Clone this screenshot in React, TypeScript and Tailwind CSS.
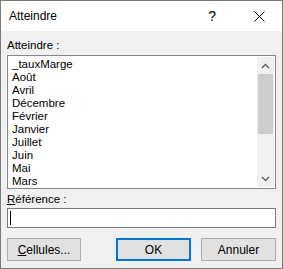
import React from "react";

const items = [
  "_tauxMarge",
  "Août",
  "Avril",
  "Décembre",
  "Février",
  "Janvier",
  "Juillet",
  "Juin",
  "Mai",
  "Mars",
];

const font = { fontFamily: '"Liberation Sans", Arial, sans-serif' };

export default function App() {
  return (
    <div
      className="w-[283px] h-[269px] border border-[#7a7a7a] bg-[#f0f0f0] flex flex-col text-[12px] text-black overflow-hidden"
      style={font}
    >
      {/* Title bar */}
      <div className="h-[30px] bg-white flex items-center pl-[8px] shrink-0">
        <span className="leading-none">Atteindre</span>
        <span className="ml-auto mr-[38px] text-[14px] leading-none">?</span>
        <svg width="11" height="11" viewBox="0 0 11 11" className="mr-[17px]">
          <path d="M0.5 0.5 L10.5 10.5 M10.5 0.5 L0.5 10.5" stroke="#000" strokeWidth="1" />
        </svg>
      </div>

      <div className="flex-1 px-[6px] flex flex-col">
        <div className="mt-[6px] h-[16px] leading-[16px] text-[11.5px]">Atteindre :</div>

        {/* List box */}
        <div className="mt-[2px] h-[134px] border border-[#828790] bg-white flex p-[1px]">
          <div className="flex-1 pl-[3px] pt-[1px] text-[11.5px]">
            {items.map((it) => (
              <div key={it} className="h-[13px] leading-[13px] whitespace-nowrap">
                {it}
              </div>
            ))}
          </div>
          <div className="w-[17px] bg-[#f0f0f0] flex flex-col items-center">
            <div className="h-[17px] w-full flex items-center justify-center">
              <svg width="9" height="6" viewBox="0 0 9 6">
                <path d="M1 5 L4.5 1.5 L8 5" fill="none" stroke="#606060" strokeWidth="1.4" />
              </svg>
            </div>
            <div className="w-[15px] h-[60px] bg-[#cdcdcd]" />
            <div className="flex-1" />
            <div className="h-[17px] w-full flex items-center justify-center">
              <svg width="9" height="6" viewBox="0 0 9 6">
                <path d="M1 1 L4.5 4.5 L8 1" fill="none" stroke="#606060" strokeWidth="1.4" />
              </svg>
            </div>
          </div>
        </div>

        <div className="mt-[2px] h-[16px] leading-[16px] text-[11.5px]">
          <span className="underline">R</span>éférence :
        </div>

        {/* Input */}
        <div className="mt-[1px] h-[20px] border border-[#7a7a7a] bg-white flex items-center pl-[2px]">
          <div className="w-[1px] h-[14px] bg-black" />
        </div>

        {/* Buttons */}
        <div className="mt-[10px] flex">
          <button className="w-[74px] h-[23px] bg-[#e1e1e1] border border-[#adadad] leading-none">
            <span className="underline">C</span>ellules...
          </button>
          <button className="ml-auto w-[75px] h-[23px] bg-[#e1e1e1] border-2 border-[#0078d7] leading-none">
            OK
          </button>
          <button className="ml-[10px] w-[75px] h-[23px] bg-[#e1e1e1] border border-[#adadad] leading-none">
            Annuler
          </button>
        </div>
      </div>
    </div>
  );
}
